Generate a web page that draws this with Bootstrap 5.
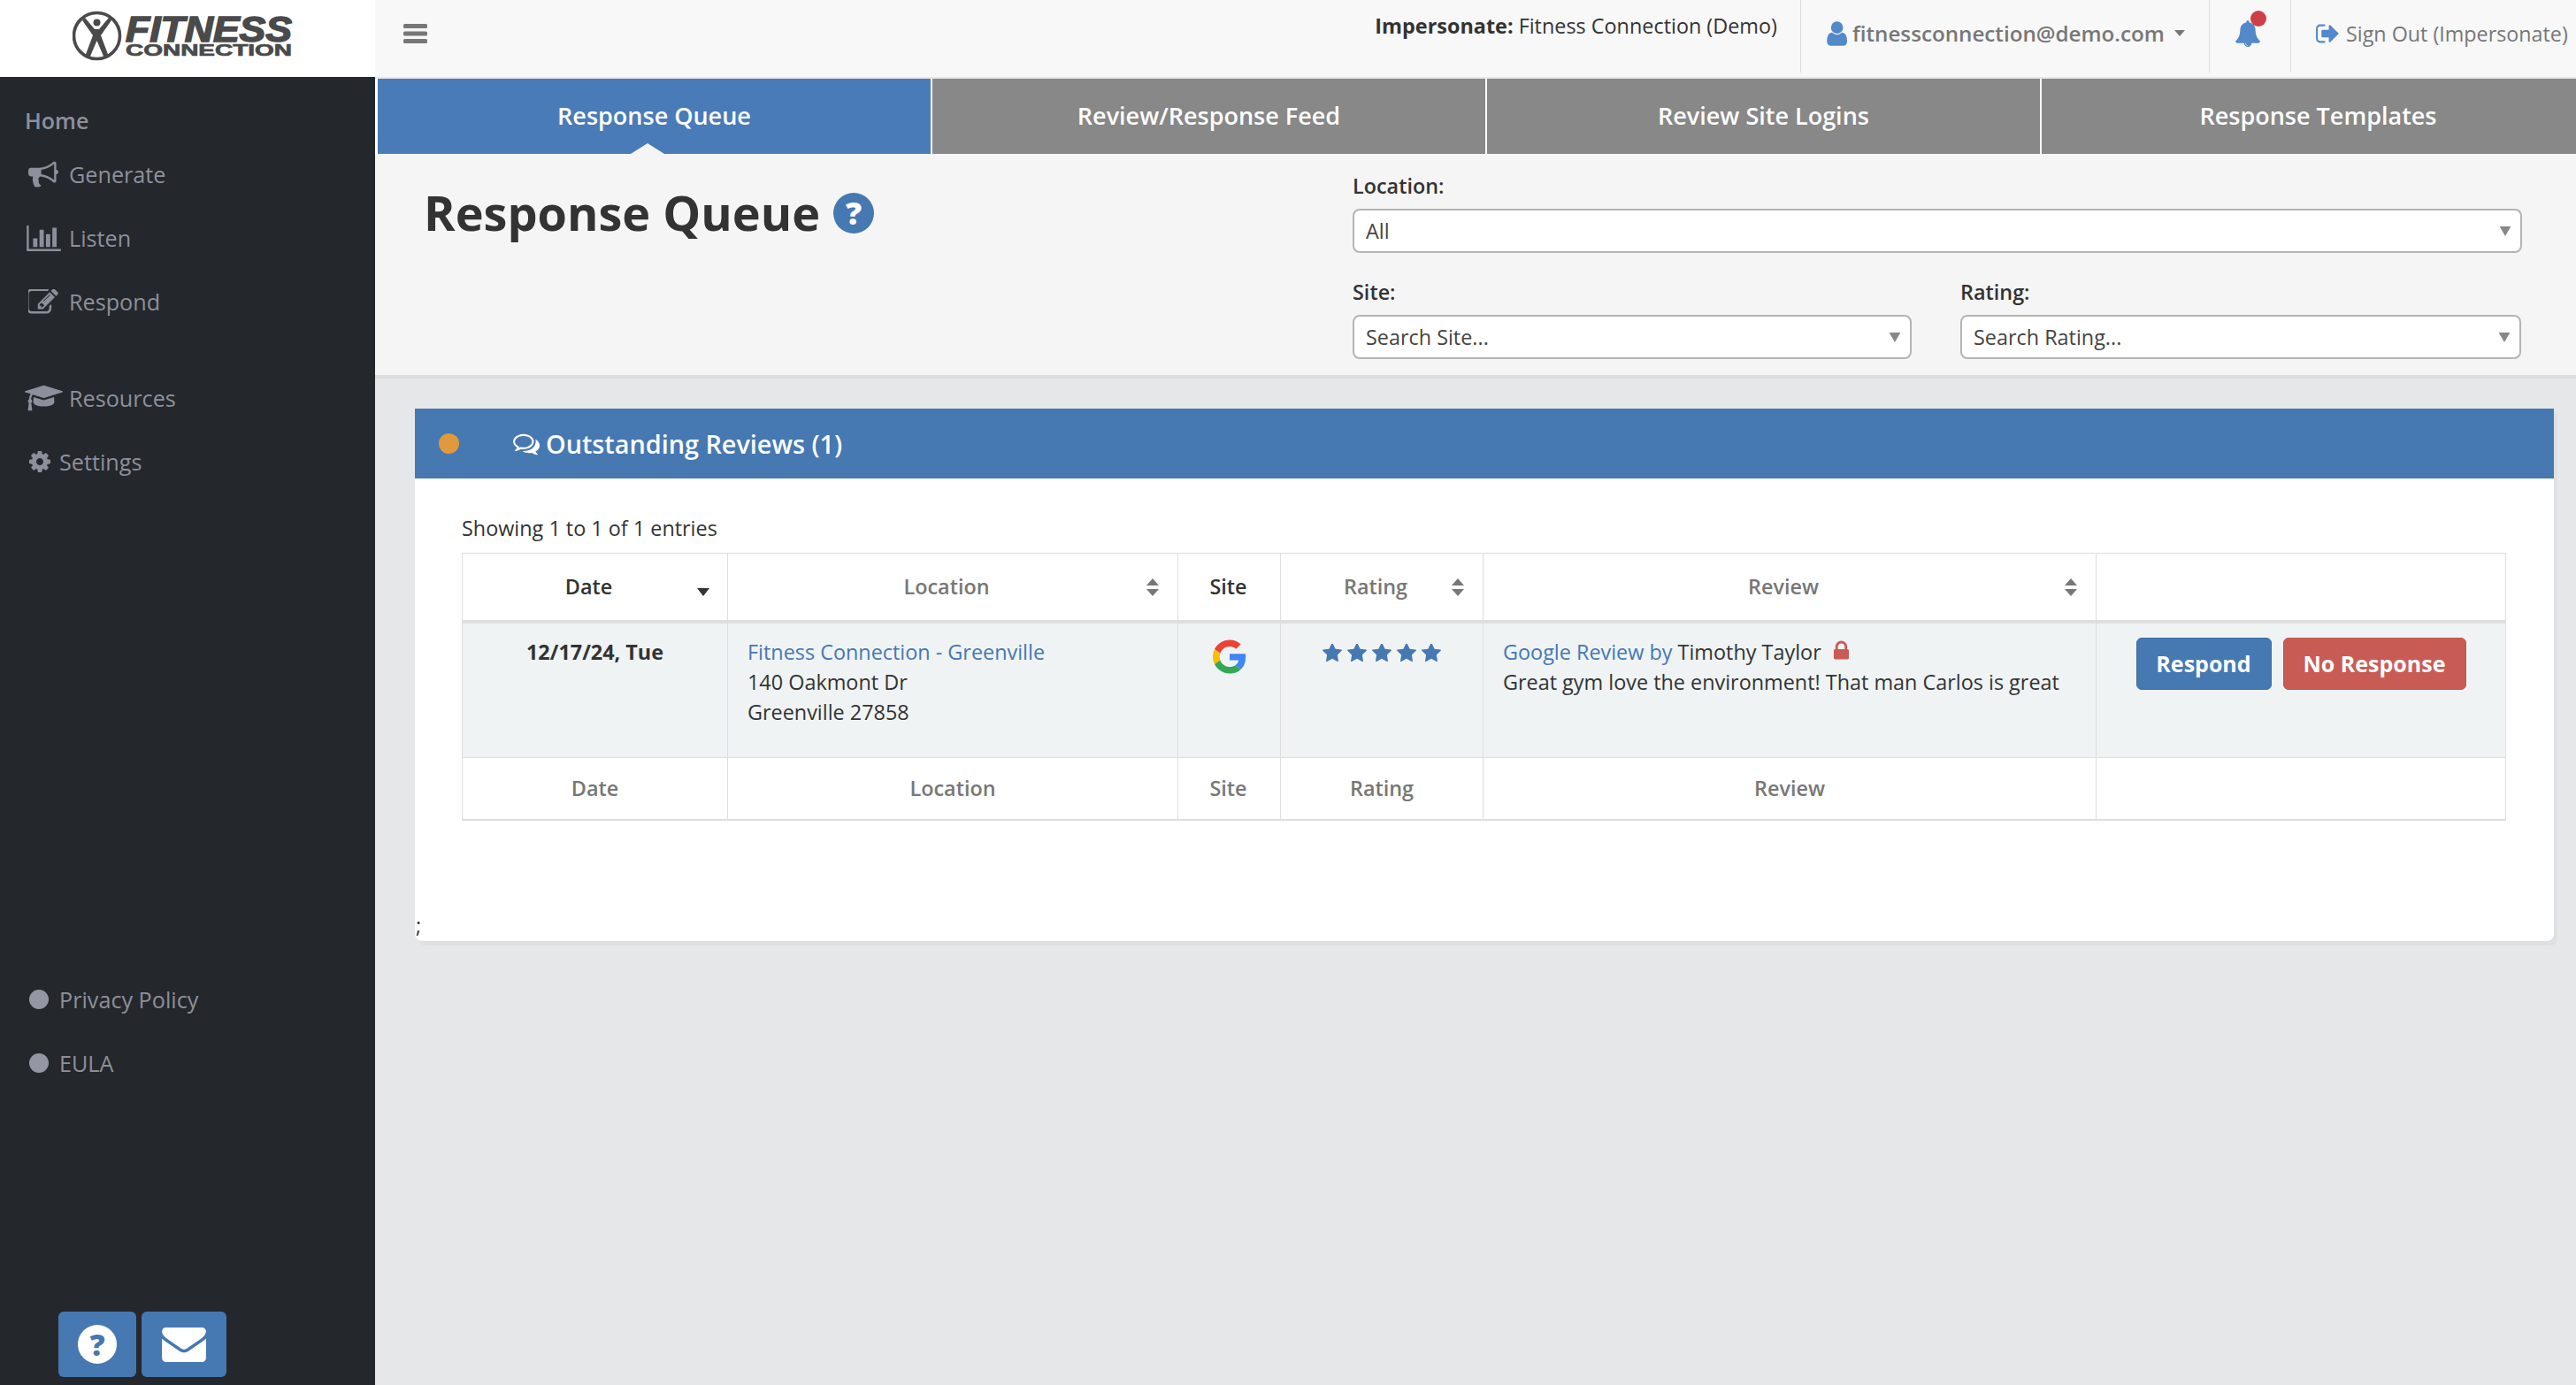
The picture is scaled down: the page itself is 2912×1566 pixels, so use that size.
<!DOCTYPE html>
<html lang="en">
<head>
<meta charset="utf-8">
<title>Response Queue</title>
<link rel="stylesheet" href="https://cdn.jsdelivr.net/npm/bootstrap@5.3.0/dist/css/bootstrap.min.css">
<style>
html,body{height:1566px;overflow:hidden}
body{font-family:"Open Sans",sans-serif;font-size:23.4px;line-height:34px;color:#333;background:#e6e7e9}
svg{fill:currentColor;display:block;flex:none}
.fc-side{width:424px;flex:none;background:#24272c;color:#8d909b;height:1566px}
.fc-logo{height:87px;background:#fff;padding:10px 0 0 82px}
.fc-menu{list-style:none;margin:0;padding:0}
.fc-menu li{height:72px;padding-left:28px;display:flex;align-items:center;font-size:25.2px}
.fc-menu li.fc-home{height:50px;font-weight:600;font-size:25px}
.fc-ico{width:42px;margin-right:8px;display:flex;justify-content:center;flex:none}
.fc-ico-s{width:33px;margin-right:6px;display:flex;justify-content:center;flex:none}
.fc-dot{width:22px;height:22px;border-radius:50%;background:#9497a3;margin:0 12px 0 5px;flex:none}
.fc-top-menu{padding-top:24px}
.fc-gap1{margin-top:37px}
.fc-gap2{margin-top:536px}
.fc-foot-btns{margin-top:245px;padding-left:66px;gap:6px}
.fc-sq{height:74px;border-radius:6px;background:#4678b2;color:#fff;border:0;padding:0}
.fc-sq1{width:88px}.fc-sq2{width:96px}
.fc-help{width:44px;height:44px;border-radius:50%;background:#fff;color:#4678b2;font-weight:800;font-size:34px;line-height:44px;text-align:center}
.fc-main{width:2488px;flex:none;height:1566px;overflow:hidden}
.fc-bar{height:87px;background:#f8f8f8;color:#777}
.fc-burger{margin:27px 0 0 32px;width:27px;height:22px}
.fc-imp{font-size:23.4px;color:#333;padding:12px 26px 0 0;line-height:34px}
.fc-imp b{font-weight:700}
.fc-cell{height:82px;border-left:1px solid #dcdcdc;display:flex;align-items:center;padding-bottom:7px}
.fc-email{width:462px;padding-left:27px;font-weight:600;font-size:24.2px}
.fc-email svg.fc-u{color:#5389c8;margin-right:6px}
.fc-caret{width:0;height:0;border-left:6px solid transparent;border-right:6px solid transparent;border-top:7px solid #777;margin-left:11px}
.fc-bell{width:92px;padding-left:28px;position:relative;color:#5389c8}
.fc-badge{position:absolute;top:12px;left:46px;width:18px;height:18px;border-radius:50%;background:#cf3f47}
.fc-out{width:323px;padding-left:27px;font-size:23.3px;white-space:nowrap}
.fc-out svg{color:#5389c8;margin-right:8px}
.fc-rule{height:2px;background:#e7e7e7}
.fc-tabs{padding-left:3px;gap:2px;width:2520px;background:#fff;height:85px}
.fc-tab{width:625px;flex:none;height:85px;padding-bottom:2px;background:#888;color:#fff;font-weight:600;font-size:27px;display:flex;align-items:center;justify-content:center;position:relative;text-decoration:none}
.fc-tab.fc-on{background:#4a7bb9}
.fc-tab.fc-on::after{content:"";position:absolute;bottom:0;left:286px;border-left:19px solid transparent;border-right:19px solid transparent;border-bottom:12px solid #f5f5f5}
.fc-pane{height:250px;background:#f5f5f5;box-shadow:0 4px 0 #dcdddf;padding:0 0 0 55px}
.fc-title{font-size:54px;font-weight:700;line-height:70px;color:#333;margin:0;padding-top:31px;width:1050px;gap:15px}
.fc-tip{width:46px;height:46px;margin-top:13px;border-radius:50%;background:#4678b2;color:#fff;font-size:36px;font-weight:800;line-height:46px;text-align:center;flex:none}
.fc-filters{width:1322px;padding-top:19px}
.fc-filters label{display:block;font-weight:600;font-size:23.4px;line-height:34px;margin-bottom:9px;color:#333}
.fc-filters .form-select{height:50px;font-size:23.4px;line-height:30px;color:#444;padding:0 40px 0 13px;border:2px solid #b4b4b4;border-radius:8px;background-color:#fff;background-position:right 10px center;background-size:14px 11px;background-image:url("data:image/svg+xml,%3Csvg xmlns='http://www.w3.org/2000/svg' viewBox='0 0 14 12'%3E%3Cpath fill='%23888' d='M0 0h14L7 12z'/%3E%3C/svg%3E")}
.fc-mt{margin-top:27px}
.fc-half{width:632px}
.fc-half2{width:634px;margin-left:55px}
.fc-box{width:2418px;margin:38px 0 0 45px;height:602px;border:0;border-radius:0 0 8px 8px;box-shadow:4px 5px 0 #dfe0e2;overflow:hidden}
.fc-box .card-header{height:79px;background:#4678b2;border:0;border-radius:0;color:#fff;padding:0 0 0 27px;font-weight:600;font-size:28.8px}
.fc-orange{width:23px;height:23px;border-radius:50%;background:#e09a3c;margin-right:61px;flex:none}
.fc-box .card-header svg{margin-right:7px}
.fc-box .card-body{padding:39px 54px 0 53px;position:relative;height:523px}
.fc-count{line-height:34px;font-size:23.4px;margin-bottom:11px;color:#333}
.fc-table{table-layout:fixed;width:2310px;margin:0;border-color:#dedede;font-size:23.4px;color:#333;--bs-table-color:#333}
.fc-table>:not(caption)>*>*{padding:0;border-color:#dedede;border-width:1px}
.fc-table thead th{height:77px;text-align:center;vertical-align:middle;font-weight:600;color:#777;position:relative;border-bottom:4px solid #dedede;padding-right:14px}
.fc-table thead th.fc-dark{color:#333}
.fc-table thead th.fc-site{padding-right:2px}
.fc-table tbody td{height:154px;background:#eff3f4;vertical-align:top;padding:15px 22px 0;line-height:34px;--bs-table-bg:#eff3f4}
.fc-table tfoot td{height:70px;text-align:center;vertical-align:middle;font-weight:600;color:#777;border-bottom-width:2px}
.fc-table tfoot td.fc-site{padding-right:2px}
.fc-table a{color:#4678b2;text-decoration:none}
.fc-sort{position:absolute;right:21px;top:28px}
.fc-sort-d{position:absolute;right:20px;top:39px;width:0;height:0;border-left:7px solid transparent;border-right:7px solid transparent;border-top:9px solid #333}
.fc-c1{width:300px}.fc-c2{width:509px}.fc-c3{width:116px}.fc-c4{width:229px}.fc-c5{width:693px}.fc-c6{width:463px}
.fc-date{font-weight:700;text-align:center}
.fc-g{margin:3px auto 0}
.fc-stars{gap:6px;color:#4678b2;padding-top:8px}
.fc-lock{color:#c85c55;vertical-align:top;margin:4px 0 0 13px}
.fc-act{gap:13px;padding-top:1px}
.fc-act .btn{height:59px;font-size:25px;font-weight:700;color:#fff;border-radius:6px;padding:0;line-height:57px}
.fc-respond{width:153px;background:#4678b2;border-color:#3f6ea6}
.fc-nores{width:207px;background:#c85c55;border-color:#bf534c}
.fc-semi{position:absolute;left:1px;top:488px;line-height:34px}
</style>
</head>
<body class="d-flex">
<aside class="fc-side d-flex flex-column">
  <div class="fc-logo">
    <svg width="252" height="62" viewBox="0 0 252 62" style="color:#4a4a4a">
      <circle cx="27.5" cy="30.5" r="26" fill="none" stroke="#4a4a4a" stroke-width="3.6"/>
      <path d="M11 13l3-3 11 13h5l11-13 3 3-12 17 9 24-5 2-8.5-20-8.5 20-5-2 9-24z"/>
      <circle cx="27.5" cy="15.5" r="4"/>
      <text x="60" y="37" font-family="Liberation Sans" font-weight="700" font-style="italic" font-size="40" textLength="188" lengthAdjust="spacingAndGlyphs" stroke="#4a4a4a" stroke-width="1.6">FITNESS</text>
      <text x="60" y="53" font-family="Liberation Sans" font-weight="700" font-size="18" textLength="188" lengthAdjust="spacingAndGlyphs" stroke="#4a4a4a" stroke-width=".7">CONNECTION</text>
    </svg>
  </div>
  <ul class="fc-menu fc-top-menu">
    <li class="fc-home">Home</li>
    <li><span class="fc-ico"><svg width="34" height="30" viewBox="0 128 1792 1540"><path d="M1664 640q53 0 90.5 37.5t37.5 90.5-37.5 90.5-90.5 37.5v384q0 52-38 90t-90 38q-417-347-812-380-58 19-91 66t-31 100.5 40 92.5q-20 33-23 65.5t6 58 33.5 55 48 50 61.5 50.5q-29 58-111.5 83t-168.5 11.5-132-55.5q-7-23-29.5-87.5t-32-94.5-23-89-15-101 3.5-98.5 22-110.5h-122q-66 0-113-47t-47-113v-192q0-66 47-113t113-47h480q435 0 896-384 52 0 90 38t38 90v384zm-128 604v-954q-394 302-768 343v270q377 42 768 341z"/></svg></span>Generate</li>
    <li><span class="fc-ico"><svg width="39" height="29" viewBox="0 128 2048 1536"><path d="M640 896v512h-256v-512h256zm384-512v1024h-256v-1024h256zm1024 1152v128h-2048v-1536h128v1408h1920zm-640-896v768h-256v-768h256zm384-384v1152h-256v-1152h256z"/></svg></span>Listen</li>
    <li><span class="fc-ico"><svg width="34" height="28" viewBox="100 160 1700 1390"><path d="M888 1184l116-116-152-152-116 116v56h96v96h56zm440-720q-16-16-33 1l-350 350q-17 17-1 33t33-1l350-350q17-17 1-33zm80 594v190q0 119-84.5 203.5t-203.5 84.5h-832q-119 0-203.5-84.5t-84.5-203.5v-832q0-119 84.5-203.5t203.5-84.5h832q63 0 117 25 15 7 18 23 3 17-9 29l-49 49q-14 14-32 8-23-6-45-6h-832q-66 0-113 47t-47 113v832q0 66 47 113t113 47h832q66 0 113-47t47-113v-126q0-13 9-22l64-64q15-15 35-7t20 29zm-96-738l288 288-672 672h-288v-288zm444 132l-92 92-288-288 92-92q28-28 68-28t68 28l152 152q28 28 28 68t-28 68z"/></svg></span>Respond</li>
    <li class="fc-gap1"><span class="fc-ico"><svg width="43" height="30" viewBox="0 128 2304 1536"><path d="M1774 836l18 316q4 69-82 128t-235 93.5-323 34.5-323-34.5-235-93.5-82-128l18-316 574 181q22 7 48 7t48-7zm530-324q0 23-22 31l-1120 352q-4 1-10 1t-10-1l-652-206q-43 34-71 111.5t-34 178.5q63 36 63 109 0 69-58 107l58 433q2 14-8 25-9 11-24 11h-192q-15 0-24-11-10-11-8-25l58-433q-58-38-58-107 0-73 65-111 11-207 98-330l-333-104q-22-8-22-31t22-31l1120-352q4-1 10-1t10 1l1120 352q22 8 22 31z"/></svg></span>Resources</li>
    <li><span class="fc-ico-s"><svg width="24" height="24" viewBox="128 128 1536 1536"><path d="M1152 896q0-106-75-181t-181-75-181 75-75 181 75 181 181 75 181-75 75-181zm512-109v222q0 12-8 23t-20 13l-185 28q-19 54-39 91 35 50 107 138 10 12 10 25t-9 23q-27 37-99 108t-94 71q-12 0-26-9l-138-108q-44 23-91 38-16 136-29 186-7 28-36 28h-222q-14 0-24.5-8.5t-11.5-21.5l-28-184q-49-16-90-37l-141 107q-10 9-25 9-14 0-25-11-126-114-165-168-7-10-7-23 0-12 8-23 15-21 51-66.5t54-70.5q-27-50-41-99l-183-27q-13-2-21-12.5t-8-23.5v-222q0-12 8-23t19-13l186-28q14-46 39-92-40-57-107-138-10-12-10-24 0-10 9-23 26-36 98.5-107.5t94.5-71.5q13 0 26 10l138 107q44-23 91-38 16-136 29-186 7-28 36-28h222q14 0 24.5 8.5t11.5 21.5l28 184q49 16 90 37l142-107q9-9 24-9 13 0 25 10 129 119 165 170 7 8 7 22 0 12-8 23-15 21-51 66.5t-54 70.5q26 50 41 98l183 28q13 2 21 12.5t8 23.5z"/></svg></span>Settings</li>
  </ul>
  <ul class="fc-menu fc-gap2">
    <li><span class="fc-dot"></span>Privacy Policy</li>
    <li><span class="fc-dot"></span>EULA</li>
  </ul>
  <div class="d-flex fc-foot-btns">
    <button class="fc-sq fc-sq1 d-flex align-items-center justify-content-center"><span class="fc-help">?</span></button>
    <button class="fc-sq fc-sq2 d-flex align-items-center justify-content-center"><svg width="52" height="40" viewBox="0 224 1792 1440"><path d="M1792 710v794q0 66-47 113t-113 47h-1472q-66 0-113-47t-47-113v-794q44 49 101 87 362 246 497 345 57 42 92.5 65.5t94.5 48 110 24.5h2q51 0 110-24.5t94.5-48 92.5-65.5q170-123 498-345 57-39 100-87zm0-294q0 79-49 151t-122 123q-376 261-468 325-10 7-42.5 30.5t-54 38-52 32.5-57.5 27-50 9h-2q-23 0-50-9t-57.5-27-52-32.5-54-38-42.5-30.5q-91-64-262-182.5t-205-142.5q-62-42-117-115.5t-55-136.5q0-78 41.5-130t118.5-52h1472q65 0 112.5 47t47.5 113z"/></svg></button>
  </div>
</aside>
<main class="fc-main">
  <header class="fc-bar d-flex">
    <svg class="fc-burger" viewBox="0 0 27 22" fill="#777"><rect width="27" height="5" rx="1.5"/><rect y="8.5" width="27" height="5" rx="1.5"/><rect y="17" width="27" height="5" rx="1.5"/></svg>
    <div class="ms-auto fc-imp"><b>Impersonate:</b> Fitness Connection (Demo)</div>
    <div class="fc-cell fc-email"><svg class="fc-u" width="25" height="28" viewBox="128 128 1408 1536"><path d="M1536 1399q0 109-62.5 187t-150.5 78h-854q-88 0-150.5-78t-62.5-187q0-85 8.5-160.5t31.5-152 58.5-131 94-89 134.5-34.5q131 128 313 128t313-128q76 0 134.5 34.5t94 89 58.5 131 31.5 152 8.5 160.5zm-256-887q0 159-112.5 271.5t-271.5 112.5-271.5-112.5-112.5-271.5 112.5-271.5 271.5-112.5 271.5 112.5 112.5 271.5z"/></svg>fitnessconnection@demo.com<span class="fc-caret"></span></div>
    <div class="fc-cell fc-bell"><svg width="30" height="32" viewBox="0 0 1792 1792"><path d="M912 1696q0-16-16-16-59 0-101.5-42.5t-42.5-101.5q0-16-16-16t-16 16q0 73 51.5 124.5t124.5 51.5q16 0 16-16zm816-288q0 52-38 90t-90 38h-448q0 106-75 181t-181 75-181-75-75-181h-448q-52 0-90-38t-38-90q50-42 91-88t85-119.5 74.5-158.5 50-206 19.5-260q0-152 117-282.5t307-158.5q-8-19-8-39 0-40 28-68t68-28 68 28 28 68q0 20-8 39 190 28 307 158.5t117 282.5q0 139 19.5 260t50 206 74.5 158.5 85 119.5 91 88z"/></svg><span class="fc-badge"></span></div>
    <div class="fc-cell fc-out"><svg width="27" height="24" viewBox="0 256 1664 1280"><path d="M704 1440q0 4 1 20t.5 26.5-3 23.5-10 19.5-20.5 6.5h-320q-119 0-203.5-84.5t-84.5-203.5v-704q0-119 84.5-203.5t203.5-84.5h320q13 0 22.5 9.5t9.5 22.5q0 4 1 20t.5 26.5-3 23.5-10 19.5-20.5 6.5h-320q-66 0-113 47t-47 113v704q0 66 47 113t113 47h312l11.5 1 11.5 3 8 5.5 7 9 2 13.5zm928-544q0 26-19 45l-544 544q-19 19-45 19t-45-19-19-45v-288h-448q-26 0-45-19t-19-45v-384q0-26 19-45t45-19h448v-288q0-26 19-45t45-19 45 19l544 544q19 19 19 45z"/></svg>Sign Out (Impersonate)</div>
  </header>
  <div class="fc-rule"></div>
  <nav class="fc-tabs d-flex">
    <a class="fc-tab fc-on" href="#">Response Queue</a>
    <a class="fc-tab" href="#">Review/Response Feed</a>
    <a class="fc-tab" href="#">Review Site Logins</a>
    <a class="fc-tab" href="#">Response Templates</a>
  </nav>
  <section class="fc-pane d-flex">
    <h1 class="fc-title d-flex align-items-start"><span>Response Queue</span><span class="fc-tip">?</span></h1>
    <form class="fc-filters">
      <label for="fLoc">Location:</label>
      <select id="fLoc" class="form-select"><option>All</option></select>
      <div class="d-flex fc-mt">
        <div class="fc-half"><label for="fSite">Site:</label><select id="fSite" class="form-select"><option>Search Site...</option></select></div>
        <div class="fc-half2"><label for="fRate">Rating:</label><select id="fRate" class="form-select"><option>Search Rating...</option></select></div>
      </div>
    </form>
  </section>
  <section class="card fc-box">
    <div class="card-header d-flex align-items-center"><span class="fc-orange"></span><svg width="30" height="27" viewBox="0 128 1792 1536"><path d="M704 384q-153 0-286 52t-211.5 141-78.5 191q0 82 53 158t149 132l97 56-35 84q34-20 62-39l44-31 53 10q78 14 153 14 153 0 286-52t211.5-141 78.5-191-78.5-191-211.5-141-286-52zm0-128q191 0 353.5 68.5t256.5 186.5 94 257-94 257-256.5 186.5-353.5 68.5q-86 0-176-16-124 88-278 128-36 9-86 16h-3q-11 0-20.5-8t-11.5-21q-1-3-1-6.5t.5-6.5 2-6l2.5-5 3.5-5.5 4-5 4.5-5 4-4.5q5-6 23-25t26-29.5 22.5-29 25-38.5 20.5-44q-124-72-195-177t-71-224q0-139 94-257t256.5-186.5 353.5-68.5zm822 1169q5 14 20.5 44t25 38.5 22.5 29 26 29.5 23 25q1 1 4 4.5t4.5 5 4 5 3.5 5.5l2.5 5 2 6 .5 6.5-1 6.5q-3 14-13 22t-22 7q-50-7-86-16-154-40-278-128-90 16-176 16-271 0-472-132 58 4 88 4 161 0 309-45t264-129q125-92 192-212t67-254q0-77-23-152 129 71 204 178t75 230q0 120-71 224.5t-195 176.5z"/></svg>Outstanding Reviews (1)</div>
    <div class="card-body">
      <div class="fc-count">Showing 1 to 1 of 1 entries</div>
      <table class="table table-bordered fc-table">
        <colgroup><col class="fc-c1"><col class="fc-c2"><col class="fc-c3"><col class="fc-c4"><col class="fc-c5"><col class="fc-c6"></colgroup>
        <thead><tr>
          <th class="fc-dark">Date<span class="fc-sort-d"></span></th>
          <th>Location<svg class="fc-sort" width="14" height="20" viewBox="0 0 14 20" fill="#777"><path d="M7 0l7 8H0zM7 20l-7-8h14z"/></svg></th>
          <th class="fc-dark fc-site">Site</th>
          <th>Rating<svg class="fc-sort" width="14" height="20" viewBox="0 0 14 20" fill="#777"><path d="M7 0l7 8H0zM7 20l-7-8h14z"/></svg></th>
          <th>Review<svg class="fc-sort" width="14" height="20" viewBox="0 0 14 20" fill="#777"><path d="M7 0l7 8H0zM7 20l-7-8h14z"/></svg></th>
          <th></th>
        </tr></thead>
        <tbody><tr>
          <td class="fc-date">12/17/24, Tue</td>
          <td><a href="#">Fitness Connection - Greenville</a><br>140 Oakmont Dr<br>Greenville 27858</td>
          <td><svg class="fc-g" width="38" height="39" viewBox="0 0 48 48"><path fill="#EA4335" d="M24 9.5c3.54 0 6.71 1.22 9.21 3.6l6.85-6.85C35.9 2.38 30.47 0 24 0 14.62 0 6.51 5.38 2.56 13.22l7.98 6.19C12.43 13.72 17.74 9.5 24 9.5z"/><path fill="#4285F4" d="M46.98 24.55c0-1.57-.15-3.09-.38-4.55H24v9.02h12.94c-.58 2.96-2.26 5.48-4.78 7.18l7.73 6c4.51-4.18 7.09-10.36 7.09-17.65z"/><path fill="#FBBC05" d="M10.53 28.59c-.48-1.45-.76-2.99-.76-4.59s.27-3.14.76-4.59l-7.98-6.19C.92 16.46 0 20.12 0 24c0 3.88.92 7.54 2.56 10.78l7.97-6.19z"/><path fill="#34A853" d="M24 48c6.48 0 11.93-2.13 15.89-5.81l-7.73-6c-2.15 1.45-4.92 2.3-8.16 2.3-6.26 0-11.57-4.22-13.47-9.91l-7.98 6.19C6.51 42.62 14.62 48 24 48z"/></svg></td>
          <td><div class="d-flex justify-content-center fc-stars">
            <svg width="22" height="21" viewBox="64 128 1664 1536"><path d="M1728 647q0 22-26 48l-363 354 86 500q1 7 1 20 0 21-10.5 35.5t-30.5 14.5q-19 0-40-12l-449-236-449 236q-22 12-40 12-21 0-31.5-14.5t-10.5-35.5q0-6 2-20l86-500-364-354q-25-27-25-48 0-37 56-46l502-73 225-455q19-41 49-41t49 41l225 455 502 73q56 9 56 46z"/></svg>
            <svg width="22" height="21" viewBox="64 128 1664 1536"><path d="M1728 647q0 22-26 48l-363 354 86 500q1 7 1 20 0 21-10.5 35.5t-30.5 14.5q-19 0-40-12l-449-236-449 236q-22 12-40 12-21 0-31.5-14.5t-10.5-35.5q0-6 2-20l86-500-364-354q-25-27-25-48 0-37 56-46l502-73 225-455q19-41 49-41t49 41l225 455 502 73q56 9 56 46z"/></svg>
            <svg width="22" height="21" viewBox="64 128 1664 1536"><path d="M1728 647q0 22-26 48l-363 354 86 500q1 7 1 20 0 21-10.5 35.5t-30.5 14.5q-19 0-40-12l-449-236-449 236q-22 12-40 12-21 0-31.5-14.5t-10.5-35.5q0-6 2-20l86-500-364-354q-25-27-25-48 0-37 56-46l502-73 225-455q19-41 49-41t49 41l225 455 502 73q56 9 56 46z"/></svg>
            <svg width="22" height="21" viewBox="64 128 1664 1536"><path d="M1728 647q0 22-26 48l-363 354 86 500q1 7 1 20 0 21-10.5 35.5t-30.5 14.5q-19 0-40-12l-449-236-449 236q-22 12-40 12-21 0-31.5-14.5t-10.5-35.5q0-6 2-20l86-500-364-354q-25-27-25-48 0-37 56-46l502-73 225-455q19-41 49-41t49 41l225 455 502 73q56 9 56 46z"/></svg>
            <svg width="22" height="21" viewBox="64 128 1664 1536"><path d="M1728 647q0 22-26 48l-363 354 86 500q1 7 1 20 0 21-10.5 35.5t-30.5 14.5q-19 0-40-12l-449-236-449 236q-22 12-40 12-21 0-31.5-14.5t-10.5-35.5q0-6 2-20l86-500-364-354q-25-27-25-48 0-37 56-46l502-73 225-455q19-41 49-41t49 41l225 455 502 73q56 9 56 46z"/></svg>
          </div></td>
          <td><a href="#">Google Review by</a> Timothy Taylor<svg class="fc-lock d-inline-block" width="18" height="22" viewBox="256 128 1216 1408"><path d="M640 768h512v-192q0-106-75-181t-181-75-181 75-75 181v192zm832 96v576q0 40-28 68t-68 28h-960q-40 0-68-28t-28-68v-576q0-40 28-68t68-28h32v-192q0-184 132-316t316-132 316 132 132 316v192h32q40 0 68 28t28 68z"/></svg><br>Great gym love the environment! That man Carlos is great</td>
          <td><div class="d-flex justify-content-center fc-act"><button class="btn fc-respond">Respond</button><button class="btn fc-nores">No Response</button></div></td>
        </tr></tbody>
        <tfoot><tr><td>Date</td><td>Location</td><td class="fc-site">Site</td><td>Rating</td><td>Review</td><td></td></tr></tfoot>
      </table>
      <span class="fc-semi">;</span>
    </div>
  </section>
</main>
</body>
</html>
